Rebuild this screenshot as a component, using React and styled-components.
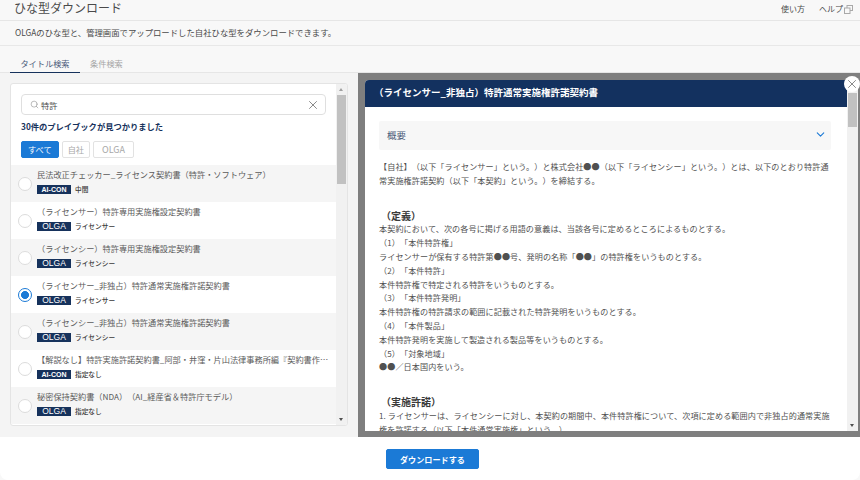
import React from "react";
import styled, { createGlobalStyle } from "styled-components";
import { X, Search, ChevronDown } from "lucide-react";

const GlobalStyle = createGlobalStyle`
    html, body{
        margin: 0;
        padding: 0;
        height: 100%;
        overflow: hidden;
        background-color: #ececec;
    }
    *{
        box-sizing: border-box;
    }
    body{
        font-family: "Noto Sans CJK JP", "Liberation Sans", sans-serif;
        color: #3e3e3c;
        text-spacing-trim: space-all;
    }
`

const items = [
    {title: "民法改正チェッカー_ライセンス契約書（特許・ソフトウェア）", tag: "AI-CON", sub: "中間"},
    {title: "（ライセンサー）特許専用実施権設定契約書", tag: "OLGA", sub: "ライセンサー"},
    {title: "（ライセンシー）特許専用実施権設定契約書", tag: "OLGA", sub: "ライセンシー"},
    {title: "（ライセンサー_非独占）特許通常実施権許諾契約書", tag: "OLGA", sub: "ライセンサー", checked: true},
    {title: "（ライセンシー_非独占）特許通常実施権許諾契約書", tag: "OLGA", sub: "ライセンシー"},
    {title: "【解説なし】特許実施許諾契約書_阿部・井窪・片山法律事務所編『契約書作成の実務と書式』より抜粋", tag: "AI-CON", sub: "指定なし"},
    {title: "秘密保持契約書（NDA）（AI_経産省＆特許庁モデル）", tag: "OLGA", sub: "指定なし"},
];

const body = [
    {text: "【自社】（以下「ライセンサー」という。）と株式会社●●（以下「ライセンシー」という。）とは、以下のとおり特許通常実施権許諾契約（以下「本契約」という。）を締結する。"},
    {gap: true},
    {text: "（定義）", heading: true},
    {text: "本契約において、次の各号に掲げる用語の意義は、当該各号に定めるところによるものとする。"},
    {text: "（1）「本件特許権」"},
    {text: "ライセンサーが保有する特許第●●号、発明の名称「●●」の特許権をいうものとする。"},
    {text: "（2）「本件特許」"},
    {text: "本件特許権で特定される特許をいうものとする。"},
    {text: "（3）「本件特許発明」"},
    {text: "本件特許権の特許請求の範囲に記載された特許発明をいうものとする。"},
    {text: "（4）「本件製品」"},
    {text: "本件特許発明を実施して製造される製品等をいうものとする。"},
    {text: "（5）「対象地域」"},
    {text: "●●／日本国内をいう。"},
    {gap: true},
    {text: "（実施許諾）", heading: true},
    {text: "1. ライセンサーは、ライセンシーに対し、本契約の期間中、本件特許権について、次項に定める範囲内で非独占的通常実施権を許諾する（以下「本件通常実施権」という。）。"},
];

const App = () => {
    return(
        <Page>
            <GlobalStyle />
            <Header>
                <Title>ひな型ダウンロード</Title>
                <HeaderLinks>
                    <span>使い方</span>
                    <HelpLink>
                        ヘルプ
                        <svg width="9" height="9" viewBox="0 0 9 9" fill="none" stroke="#a9a9a9" strokeWidth="1">
                            <rect x="3" y="0.5" width="5.5" height="5" />
                            <rect x="0.5" y="3" width="5.5" height="5.5" fill="#f8f8f8" />
                        </svg>
                    </HelpLink>
                </HeaderLinks>
            </Header>
            <Description>OLGAのひな型と、管理画面でアップロードした自社ひな型をダウンロードできます。</Description>
            <Tabs>
                <Tab $active>タイトル検索</Tab>
                <Tab>条件検索</Tab>
            </Tabs>
            <Main>
                <LeftPane>
                    <ListCard>
                        <ListContent>
                            <SearchArea>
                                <SearchBox>
                                    <Search size={9} color="#8a8a8a" strokeWidth={1.5} />
                                    <SearchValue>特許</SearchValue>
                                    <X size={14} color="#6f6f6f" strokeWidth={1.4} />
                                </SearchBox>
                                <Count>30件のプレイブックが見つかりました</Count>
                                <Filters>
                                    <Filter $active>すべて</Filter>
                                    <Filter>自社</Filter>
                                    <Filter $wide>OLGA</Filter>
                                </Filters>
                            </SearchArea>
                            {items.map((item, i) => (
                                <Item key={item.title} $odd={i % 2 === 0}>
                                    <Radio $checked={item.checked} />
                                    <ItemText>
                                        <ItemTitle>{item.title}</ItemTitle>
                                        <ItemMeta>
                                            <Tag $small={item.tag === "AI-CON"}>{item.tag}</Tag>
                                            <span>{item.sub}</span>
                                        </ItemMeta>
                                    </ItemText>
                                </Item>
                            ))}
                        </ListContent>
                        <Scrollbar>
                            <ScrollArrow $up />
                            <Thumb $top={4} $height={89} />
                            <ScrollArrow />
                        </Scrollbar>
                    </ListCard>
                </LeftPane>
                <Preview>
                    <PreviewCard>
                        <PreviewHeader>（ライセンサー_非独占）特許通常実施権許諾契約書</PreviewHeader>
                        <PreviewBody>
                            <Accordion>
                                <span>概要</span>
                                <ChevronDown size={13} color="#1b7ad6" strokeWidth={2} />
                            </Accordion>
                            {body.map((line, i) => line.gap
                                ? <Gap key={i} />
                                : <Line key={i} $heading={line.heading}>{line.text}</Line>
                            )}
                        </PreviewBody>
                    </PreviewCard>
                    <Scrollbar>
                        <ScrollArrow $up />
                        <Thumb $top={6} $height={34} />
                        <ScrollArrow />
                    </Scrollbar>
                    <CloseButton><X size={14} color="#6f6f6f" strokeWidth={1.4} /></CloseButton>
                </Preview>
            </Main>
            <Footer>
                <DownloadButton>ダウンロードする</DownloadButton>
            </Footer>
        </Page>
    )
}

export default App;

const Page = styled.div`
    display: flex;
    flex-direction: column;
    width: 860px;
    height: 480px;
    overflow: hidden;
    background-color: #f8f8f8;
`
const Header = styled.header`
    display: flex;
    justify-content: space-between;
    align-items: center;
    height: 21px;
    padding: 0 7px 5px 14px;
    border-bottom: 1px solid #e6e6e6;
`
const Title = styled.h1`
    margin: 0;
    font-size: 12px;
    line-height: 14px;
    font-weight: 400;
    color: #4a4a4a;
`
const HeaderLinks = styled.div`
    display: flex;
    gap: 14px;
    margin-top: 3px;
    font-size: 8px;
    line-height: 10px;
    color: #4a4a4a;
`
const HelpLink = styled.span`
    display: flex;
    align-items: center;
    gap: 1px;
`
const Description = styled.div`
    height: 25px;
    padding-left: 15px;
    font-size: 8.37px;
    line-height: 22px;
    color: #4a4a4a;
    border-bottom: 1px solid #e8e8e8;
`
const Tabs = styled.div`
    display: flex;
    gap: 10px;
    height: 27px;
    padding-left: 10px;
    border-bottom: 1px solid #e6e6e6;
`
const Tab = styled.div`
    width: ${p => p.$active ? "70px" : "auto"};
    height: 27px;
    text-align: center;
    font-size: 8.2px;
    line-height: 34px;
    color: ${p => p.$active ? "#4a5a78" : "#a5a5a5"};
    border-bottom: ${p => p.$active ? "1px solid #16325c" : "none"};
`
const Main = styled.main`
    display: flex;
    height: 364px;
`
const LeftPane = styled.section`
    width: 358px;
    padding: 10px 10px 11px;
    background-color: #f4f4f4;
`
const ListCard = styled.div`
    display: flex;
    height: 343px;
    overflow: hidden;
    border: 1px solid #e4e4e4;
    border-radius: 3px;
    background-color: #fff;
`
const ListContent = styled.div`
    flex: 1;
    min-width: 0;
`
const SearchArea = styled.div`
    height: 81px;
    padding: 10px 10px 0;
`
const SearchBox = styled.div`
    display: flex;
    align-items: center;
    gap: 2px;
    width: 305px;
    height: 21px;
    padding: 0 5px 0 8px;
    border: 1px solid #dfdfdf;
    border-radius: 4px;
    background-color: #fff;
`
const SearchValue = styled.span`
    flex: 1;
    font-size: 8.2px;
    color: #4a4a4a;
`
const Count = styled.div`
    margin-top: 5px;
    font-size: 8.27px;
    line-height: 12px;
    font-weight: 700;
    color: #16325c;
`
const Filters = styled.div`
    display: flex;
    gap: 3px;
    margin-top: 9px;
`
const Filter = styled.div`
    height: 17px;
    padding: 0 ${p => p.$wide ? "8px" : p.$active ? "6px" : "5px"};
    font-size: ${p => p.$wide ? "9px" : "8.2px"};
    line-height: 15px;
    border: 1px solid ${p => p.$active ? "#1b7ad6" : "#e2e2e2"};
    border-radius: 2px;
    color: ${p => p.$active ? "#fff" : "#a8a8a8"};
    background-color: ${p => p.$active ? "#1b7ad6" : "#fff"};
`
const Item = styled.div`
    display: flex;
    align-items: center;
    height: 37px;
    padding-left: 7px;
    background-color: ${p => p.$odd ? "#f5f5f5" : "#fff"};
`
const Radio = styled.span`
    flex: none;
    width: 14px;
    height: 14px;
    margin-top: 1px;
    border-radius: 50%;
    border: 1.5px solid ${p => p.$checked ? "#1b7ad6" : "#dcdcdc"};
    background-color: #fff;
    background-image: ${p => p.$checked ? "radial-gradient(circle, #1b7ad6 0 3.7px, transparent 4.2px)" : "none"};
`
const ItemText = styled.div`
    min-width: 0;
    flex: 1;
    margin-left: 5px;
    padding: 0 3px 6px 0;
`
const ItemTitle = styled.div`
    overflow: hidden;
    white-space: nowrap;
    text-overflow: ellipsis;
    font-size: 8.2px;
    line-height: 12px;
    color: #5b5b5b;
`
const ItemMeta = styled.div`
    display: flex;
    align-items: center;
    gap: 4px;
    margin-top: 5px;
    font-size: 6.7px;
    line-height: 9px;
    font-weight: 500;
    color: #3a3a3a;
`
const Tag = styled.span`
    width: 34px;
    height: 9px;
    text-align: center;
    font-family: "Liberation Sans", sans-serif;
    font-size: ${p => p.$small ? "7px" : "8.5px"};
    font-weight: ${p => p.$small ? 700 : 400};
    line-height: 9px;
    color: #fff;
    background-color: #16325c;
`
const Scrollbar = styled.div`
    display: flex;
    flex-direction: column;
    flex: none;
    width: 11px;
    background-color: #f1f1f1;
`
const Thumb = styled.div`
    height: ${p => p.$height}px;
    margin: ${p => p.$top}px 1px 0;
    background-color: #c1c1c1;
`
const ScrollArrow = styled.span`
    flex: none;
    width: 0;
    height: 0;
    margin: ${p => p.$up ? "4px 0 0 3px" : "auto 0 4px 3px"};
    border-left: 2.5px solid transparent;
    border-right: 2.5px solid transparent;
    border-top: ${p => p.$up ? "none" : "3px solid #505050"};
    border-bottom: ${p => p.$up ? "3px solid #a0a0a0" : "none"};
`
const Preview = styled.section`
    position: relative;
    display: flex;
    flex: 1;
    padding: 7px 2px 6px 7px;
    background-color: #7f7f7f;
`
const PreviewCard = styled.div`
    display: flex;
    flex-direction: column;
    flex: 1;
    min-width: 0;
    overflow: hidden;
    border-radius: 4px 0 0 0;
    background-color: #fff;
`
const PreviewHeader = styled.div`
    flex: none;
    height: 27px;
    padding-left: 9px;
    font-size: 9.5px;
    line-height: 25px;
    font-weight: 700;
    color: #fff;
    background-color: #13315f;
`
const PreviewBody = styled.div`
    flex: 1;
    overflow: hidden;
    padding: 14px 16px 0 14px;
`
const Accordion = styled.div`
    display: flex;
    justify-content: space-between;
    align-items: center;
    height: 29px;
    margin-bottom: 10px;
    padding: 0 4px 2px 8px;
    font-size: 9.5px;
    color: #4a5a78;
    border-radius: 2px;
    background-color: #f7f7f7;
`
const Line = styled.p`
    margin: ${p => p.$heading ? "7px" : "0"} 0 0;
    padding-left: ${p => p.$heading ? "2px" : "0"};
    font-size: ${p => p.$heading ? "10px" : "8.1px"};
    letter-spacing: ${p => p.$heading ? "0" : "0.1px"};
    line-height: 13.8px;
    font-weight: ${p => p.$heading ? 700 : 400};
    color: ${p => p.$heading ? "#3a3a3a" : "#505050"};
`
const Gap = styled.div`
    height: 14px;
`
const CloseButton = styled.div`
    position: absolute;
    top: 3px;
    right: 0;
    display: flex;
    justify-content: center;
    align-items: center;
    width: 16px;
    height: 16px;
    border-radius: 50%;
    background-color: #fff;
`
const Footer = styled.footer`
    display: flex;
    justify-content: center;
    align-items: flex-start;
    flex: 1;
    padding: 12px 0 0 5px;
    border-radius: 0 0 8px 8px;
    background-color: #fff;
`
const DownloadButton = styled.button`
    width: 93px;
    height: 20px;
    padding: 0;
    font-family: inherit;
    font-size: 8.15px;
    font-weight: 700;
    color: #fff;
    border: 1px solid #1b7ad6;
    border-radius: 2px;
    background-color: #1b7ad6;
`
